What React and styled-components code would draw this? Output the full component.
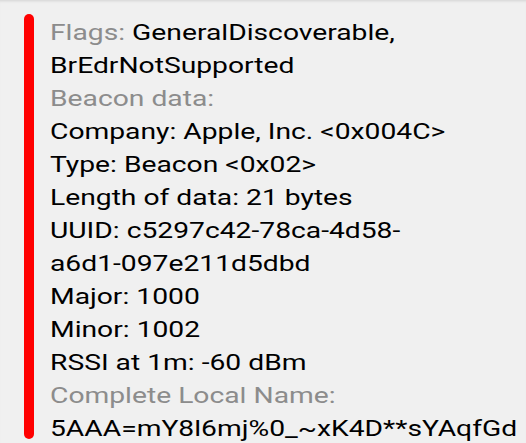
import React from "react";
import styled, { createGlobalStyle } from "styled-components";

const Global = createGlobalStyle`
  html, body {
    margin: 0;
    padding: 0;
    background: #f0f0f0;
    overflow: hidden;
  }
`;

const Page = styled.div`
  height: 443px;
  box-sizing: border-box;
  padding: 14px 0 0 24px;
  box-shadow: inset 0 3px 3px -2px rgba(0, 0, 0, 0.12);
  display: flex;
  gap: 16px;
  font-family: Roboto, "Liberation Sans", sans-serif;
`;

const Bar = styled.div`
  width: 10px;
  height: 425px;
  flex-shrink: 0;
  border-radius: 5px;
  background: #ff0000;
`;

// the glyphs in the capture are drawn wider than Roboto's normal width
const Lines = styled.div`
  padding-top: 2px;
  font-size: 22.5px;
  line-height: 33px;
  color: #000;
  transform: scaleX(1.255);
  transform-origin: left top;
`;

const Line = styled.div`
  color: ${(p) => (p.$label ? "#8c8c8c" : "#000")};
  white-space: nowrap;
`;

const Label = styled.span`
  color: #8c8c8c;
`;

const rows = [
  { label: true, text: "Beacon data:" },
  { text: "Company: Apple, Inc. <0x004C>" },
  { text: "Type: Beacon <0x02>" },
  { text: "Length of data: 21 bytes" },
  { text: "UUID: c5297c42-78ca-4d58-" },
  { text: "a6d1-097e211d5dbd" },
  { text: "Major: 1000" },
  { text: "Minor: 1002" },
  { text: "RSSI at 1m: -60 dBm" },
  { label: true, text: "Complete Local Name:" },
  { text: "5AAA=mY8l6mj%0_~xK4D**sYAqfGd" },
];

export default function App() {
  return (
    <>
      <Global />
      <Page>
        <Bar />
        <Lines>
          <Line>
            <Label>Flags:</Label> GeneralDiscoverable,
          </Line>
          <Line>BrEdrNotSupported</Line>
          {rows.map((r, i) => (
            <Line key={i} $label={r.label}>
              {r.text}
            </Line>
          ))}
        </Lines>
      </Page>
    </>
  );
}
